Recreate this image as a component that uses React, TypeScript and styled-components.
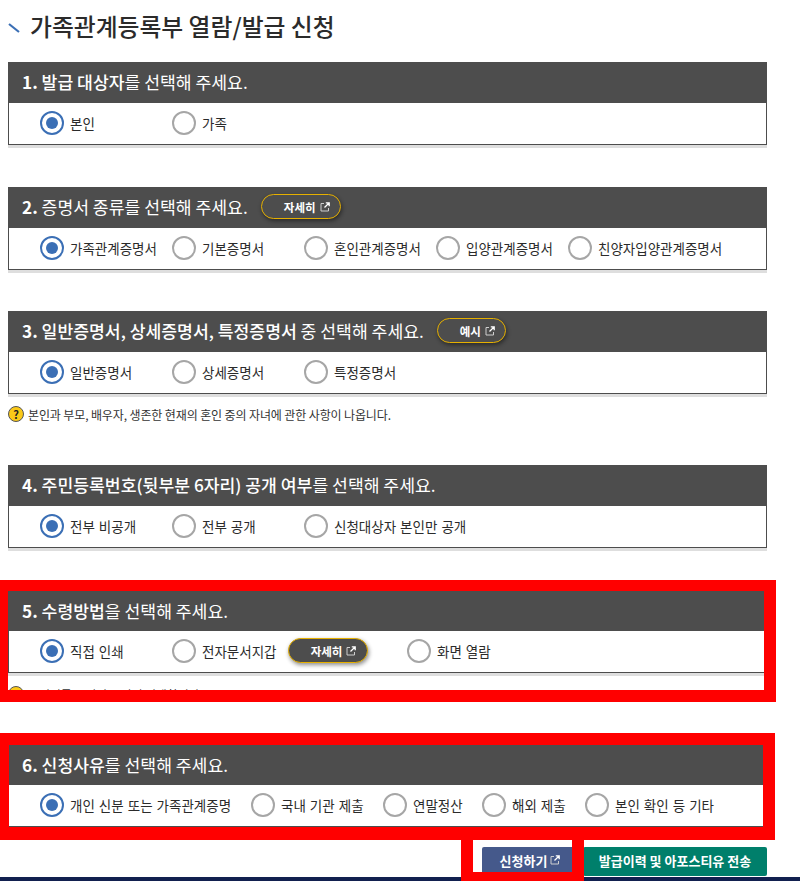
import React from 'react';
import styled, { createGlobalStyle } from 'styled-components';

const GlobalStyle = createGlobalStyle`
  html, body {
    margin: 0;
    padding: 0;
    height: 881px;
    overflow: hidden;
    background: #fff;
    font-family: "Noto Sans CJK KR", "Noto Sans", sans-serif;
  }
  * { box-sizing: border-box; }
`;

const Page = styled.div`
  width: 800px;
  height: 881px;
  overflow: hidden;
  position: relative;
`;

const Content = styled.main`
  padding: 0 33px 0 8px;
`;

const TitleRow = styled.div`
  display: flex;
  align-items: center;
  gap: 10px;
  height: 62px;
  padding-bottom: 11px;
`;

const Title = styled.h2`
  margin: 0;
  font-size: 23.8px;
  font-weight: 500;
  color: #2b2b2b;
`;

const Section = styled.section<{ $gap?: number }>`
  position: relative;
  margin-bottom: ${(props) => props.$gap ?? 42}px;
`;

const Header = styled.div<{ $h?: number }>`
  display: flex;
  align-items: center;
  height: ${(props) => props.$h ?? 41}px;
  padding: 0 0 2px 14px;
  gap: 13px;
  background: #4d4d4d;
`;

const Heading = styled.h3`
  margin: 0;
  font-size: 17.2px;
  font-weight: 400;
  color: #fff;
  white-space: nowrap;
  b { font-weight: 500; }
`;

const Num = styled.span`
  font-weight: 700;
`;

const Body = styled.div`
  display: flex;
  align-items: center;
  height: 42px;
  padding: 0 0 2px 31px;
  background: #fff;
  border: 1px solid #4d4d4d;
  border-top: 0;
  box-shadow: 0 3px 0 #dedede;
`;

const Option = styled.label<{ $w: number }>`
  display: flex;
  align-items: center;
  flex: 0 0 ${(props) => props.$w}px;
  gap: 6px;
  font-size: 13.5px;
  word-spacing: 1px;
  color: #2b2b2b;
  white-space: nowrap;
`;

const Radio = styled.span<{ $on?: boolean }>`
  display: flex;
  align-items: center;
  justify-content: center;
  width: 24px;
  height: 24px;
  border-radius: 50%;
  background: #fff;
  border: 2px solid ${(props) => (props.$on ? '#3b6fb5' : '#a6a6a6')};
  &::after {
    content: '';
    display: ${(props) => (props.$on ? 'block' : 'none')};
    width: 12px;
    height: 12px;
    border-radius: 50%;
    background: #3b6fb5;
  }
`;

const Pill = styled.span<{ $w: number; $inline?: boolean }>`
  display: inline-flex;
  align-items: center;
  justify-content: center;
  gap: 4px;
  width: ${(props) => props.$w}px;
  height: 25px;
  margin-left: ${(props) => (props.$inline ? 5 : 0)}px;
  padding-left: 12px;
  border: 1px solid #e6b000;
  border-radius: 13px;
  background: #4d4d4d;
  color: #fff;
  font-size: 11.5px;
  font-weight: 700;
  box-shadow: 1px 2px 4px rgba(0, 0, 0, 0.45);
`;

const Hint = styled.p<{ $top?: number }>`
  display: flex;
  align-items: center;
  gap: 4px;
  margin: ${(props) => props.$top ?? 0}px 0 0;
  height: 16px;
  font-size: 12px;
  letter-spacing: -0.12px;
  color: #333;
`;

const HintIcon = styled.span`
  display: flex;
  align-items: center;
  justify-content: center;
  flex: none;
  width: 16px;
  height: 16px;
  border-radius: 50%;
  background: #fbc918;
  border: 1px solid #555;
  color: #222;
  font-size: 11px;
  font-weight: 700;
  line-height: 1;
`;

const Highlight = styled.div<{ $top: number; $left: number; $width: number; $height: number; $border: string }>`
  position: absolute;
  top: ${(props) => props.$top}px;
  left: ${(props) => props.$left}px;
  width: ${(props) => props.$width}px;
  height: ${(props) => props.$height}px;
  border-style: solid;
  border-color: #ff0000;
  border-width: ${(props) => props.$border};
  pointer-events: none;
`;

const Actions = styled.div`
  position: relative;
  display: flex;
  justify-content: flex-end;
  gap: 5px;
`;

const ActionButton = styled.button<{ $bg: string; $w: number }>`
  display: flex;
  align-items: center;
  justify-content: center;
  gap: 3px;
  width: ${(props) => props.$w}px;
  height: 29px;
  padding: 0 0 3px;
  border: 0;
  border-radius: 2px;
  background: ${(props) => props.$bg};
  color: #fff;
  font-family: inherit;
  font-size: 13px;
  font-weight: 700;
`;

const FooterBar = styled.div`
  height: 10px;
  margin-top: 1px;
  background: #12204f;
`;

const SlashIcon = () => (
  <svg width="12" height="10" viewBox="0 0 12 10" style={{ marginTop: 4 }}>
    <path d="M1 1 L11 9" stroke="#3b6fb5" strokeWidth="2.2" />
  </svg>
);

// small "opens in a new window" mark used on pills and the apply button
const NewWindowIcon = () => (
  <svg width="10" height="10" viewBox="0 0 10 10" fill="none" stroke="#fff">
    <path d="M4 1.5 H1 V9 H8.5 V6" stroke="#cfcfcf" strokeWidth="1" />
    <path d="M4.5 5.5 L9 1 M5.8 0.8 H9.2 V4.2" strokeWidth="1.3" />
  </svg>
);

type Choice = { label: string; w: number; on?: boolean; extra?: React.ReactNode };

const Choices = ({ items }: { items: Choice[] }) => (
  <Body>
    {items.map((item) => (
      <Option key={item.label} $w={item.w}>
        <Radio $on={item.on} />
        {item.label}
        {item.extra}
      </Option>
    ))}
  </Body>
);

const DetailPill = ({ text, w, inline }: { text: string; w: number; inline?: boolean }) => (
  <Pill $w={w} $inline={inline}>
    {text}
    <NewWindowIcon />
  </Pill>
);

export default function App() {
  return (
    <Page>
      <GlobalStyle />
      <Content>
        <TitleRow>
          <SlashIcon />
          <Title>가족관계등록부 열람/발급 신청</Title>
        </TitleRow>

        <Section>
          <Header>
            <Heading><Num>1.</Num> <b>발급 대상자</b>를 선택해 주세요.</Heading>
          </Header>
          <Choices items={[{ label: '본인', w: 132, on: true }, { label: '가족', w: 132 }]} />
        </Section>

        <Section $gap={41}>
          <Header>
            <Heading><Num>2.</Num> 증명서 종류를 선택해 주세요.</Heading>
            <DetailPill text="자세히" w={80} />
          </Header>
          <Choices
            items={[
              { label: '가족관계증명서', w: 132, on: true },
              { label: '기본증명서', w: 132 },
              { label: '혼인관계증명서', w: 132 },
              { label: '입양관계증명서', w: 132 },
              { label: '친양자입양관계증명서', w: 180 },
            ]}
          />
        </Section>

        <Section $gap={12}>
          <Header>
            <Heading><Num>3.</Num> <b>일반증명서, 상세증명서, 특정증명서</b> 중 선택해 주세요.</Heading>
            <DetailPill text="예시" w={69} />
          </Header>
          <Choices
            items={[
              { label: '일반증명서', w: 132, on: true },
              { label: '상세증명서', w: 132 },
              { label: '특정증명서', w: 132 },
            ]}
          />
        </Section>

        <Section $gap={43}>
          <Hint>
            <HintIcon>?</HintIcon>
            본인과 부모, 배우자, 생존한 현재의 혼인 중의 자녀에 관한 사항이 나옵니다.
          </Hint>
        </Section>

        <Section $gap={43}>
          <Header>
            <Heading><Num>4.</Num> <b>주민등록번호(뒷부분 6자리) 공개 여부</b>를 선택해 주세요.</Heading>
          </Header>
          <Choices
            items={[
              { label: '전부 비공개', w: 132, on: true },
              { label: '전부 공개', w: 132 },
              { label: '신청대상자 본인만 공개', w: 200 },
            ]}
          />
        </Section>

        <Section $gap={43}>
          <Header $h={40}>
            <Heading><Num>5.</Num> <b>수령방법</b>을 선택해 주세요.</Heading>
          </Header>
          <Choices
            items={[
              { label: '직접 인쇄', w: 132, on: true },
              { label: '전자문서지갑', w: 235, extra: <DetailPill text="자세히" w={80} inline /> },
              { label: '화면 열람', w: 132 },
            ]}
          />
          <Hint $top={13}>
            <HintIcon>?</HintIcon>
            증명서를 프린터로 직접 인쇄합니다.
          </Hint>
          <Highlight $top={-11} $left={-8} $width={776} $height={122} $border="11px 12px 12px 8px" />
        </Section>

        <Section $gap={20}>
          <Header $h={40}>
            <Heading><Num>6.</Num> <b>신청사유</b>를 선택해 주세요.</Heading>
          </Header>
          <Choices
            items={[
              { label: '개인 신분 또는 가족관계증명', w: 211, on: true },
              { label: '국내 기관 제출', w: 132 },
              { label: '연말정산', w: 99 },
              { label: '해외 제출', w: 103 },
              { label: '본인 확인 등 기타', w: 160 },
            ]}
          />
          <Highlight $top={-12} $left={-8} $width={775} $height={107} $border="12px 12px 13px 9px" />
        </Section>

        <Actions>
          <ActionButton $bg="#45598b" $w={96}>
            신청하기
            <NewWindowIcon />
          </ActionButton>
          <ActionButton $bg="#007f6b" $w={184}>발급이력 및 아포스티유 전송</ActionButton>
          <Highlight $top={-7} $left={453} $width={123} $height={41} $border="0 12px 9px 12px" />
        </Actions>
      </Content>
      <FooterBar />
    </Page>
  );
}
